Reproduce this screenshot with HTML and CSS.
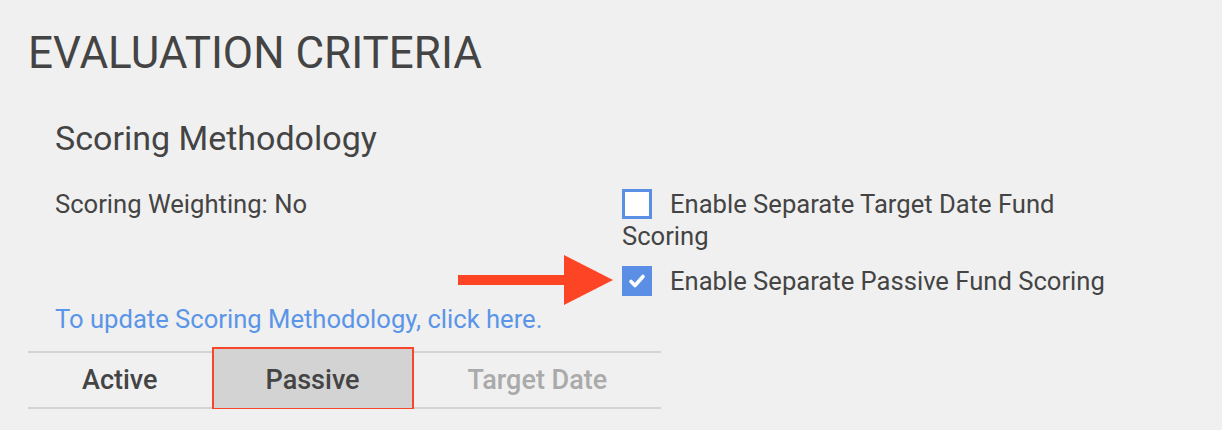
FILE: index.html
```html
<!DOCTYPE html>
<html lang="en">
<head>
<meta charset="utf-8">
<title>Evaluation Criteria</title>
<link rel="stylesheet" href="styles.css">
</head>
<body>
<div class="page">
  <h1 class="title">EVALUATION CRITERIA</h1>
  <section class="section">
    <h2 class="subtitle">Scoring Methodology</h2>
    <div class="row">
      <div class="left">Scoring Weighting: No</div>
      <div class="right">
        <div class="option">
          <span class="box"></span><span class="label">Enable Separate Target Date Fund Scoring</span>
        </div>
        <div class="option">
          <span class="arrow">
            <svg width="156" height="50" viewBox="0 0 156 50"><rect x="0" y="20" width="108" height="10" fill="#fd4526"/><polygon points="106,0 155,25 106,50" fill="#fd4526"/></svg>
          </span>
          <span class="box checked"><svg width="30" height="30" viewBox="0 0 30 30"><path d="M9 15.5 L13 19.5 L21 10.5" fill="none" stroke="#fff" stroke-width="3.6" stroke-linecap="round" stroke-linejoin="round"/></svg></span><span class="label">Enable Separate Passive Fund Scoring</span>
        </div>
      </div>
    </div>
    <a class="link" href="#">To update Scoring Methodology, click here.</a>
  </section>
  <nav class="tabs">
    <div class="tab">Active</div>
    <div class="tab selected"><span class="tab-text">Passive</span></div>
    <div class="tab disabled">Target Date</div>
  </nav>
</div>
</body>
</html>
```

FILE: styles.css
```css
html, body {
  margin: 0;
  padding: 0;
  background: #f0f0f0;
}
body {
  font-family: Roboto, "Liberation Sans", sans-serif;
  color: #444;
}
.page {
  padding: 27px 28px 0 28px;
}
.title {
  margin: 0;
  font-size: 44px;
  line-height: 52px;
  font-weight: 400;
  color: #444;
}
.section {
  padding-left: 27px;
}
.subtitle {
  margin: 39px 0 0 0;
  font-size: 34px;
  line-height: 40px;
  font-weight: 400;
  color: #444;
}
.row {
  display: grid;
  grid-template-columns: 567px 490px;
  margin-top: 30px;
  font-size: 25.6px;
  line-height: 32px;
}
.option {
  position: relative;
}
.option + .option {
  margin-top: 13px;
}
.box {
  display: inline-block;
  width: 30px;
  height: 30px;
  box-sizing: border-box;
  border: 3px solid #5b8fe6;
  background: #fff;
  vertical-align: -6px;
  margin-right: 18px;
}
.box.checked {
  border: none;
  background: #5b8fe6;
}
.box svg {
  display: block;
}
.arrow {
  position: absolute;
  left: -164px;
  top: -10px;
}
.arrow svg {
  display: block;
}
.link {
  display: block;
  margin-top: 6px;
  font-size: 25.6px;
  line-height: 32px;
  color: #5b95e8;
  text-decoration: none;
}
.tabs {
  display: flex;
  align-self: flex-start;
  width: max-content;
  margin-top: 16px;
  border-top: 2px solid #d4d4d4;
  border-bottom: 2px solid #d4d4d4;
}
.tab {
  padding: 0 54px;
  font-size: 27px;
  font-weight: 500;
  line-height: 54px;
  color: #444;
}
.tab.selected {
  position: relative;
}
.tab.selected::before {
  content: "";
  position: absolute;
  top: -6px;
  bottom: -3px;
  left: 0;
  right: 0;
  background: #d3d3d3;
  border: 2px solid #f7462a;
}
.tab-text {
  position: relative;
}
.tab.disabled {
  color: #aaa;
}
```
